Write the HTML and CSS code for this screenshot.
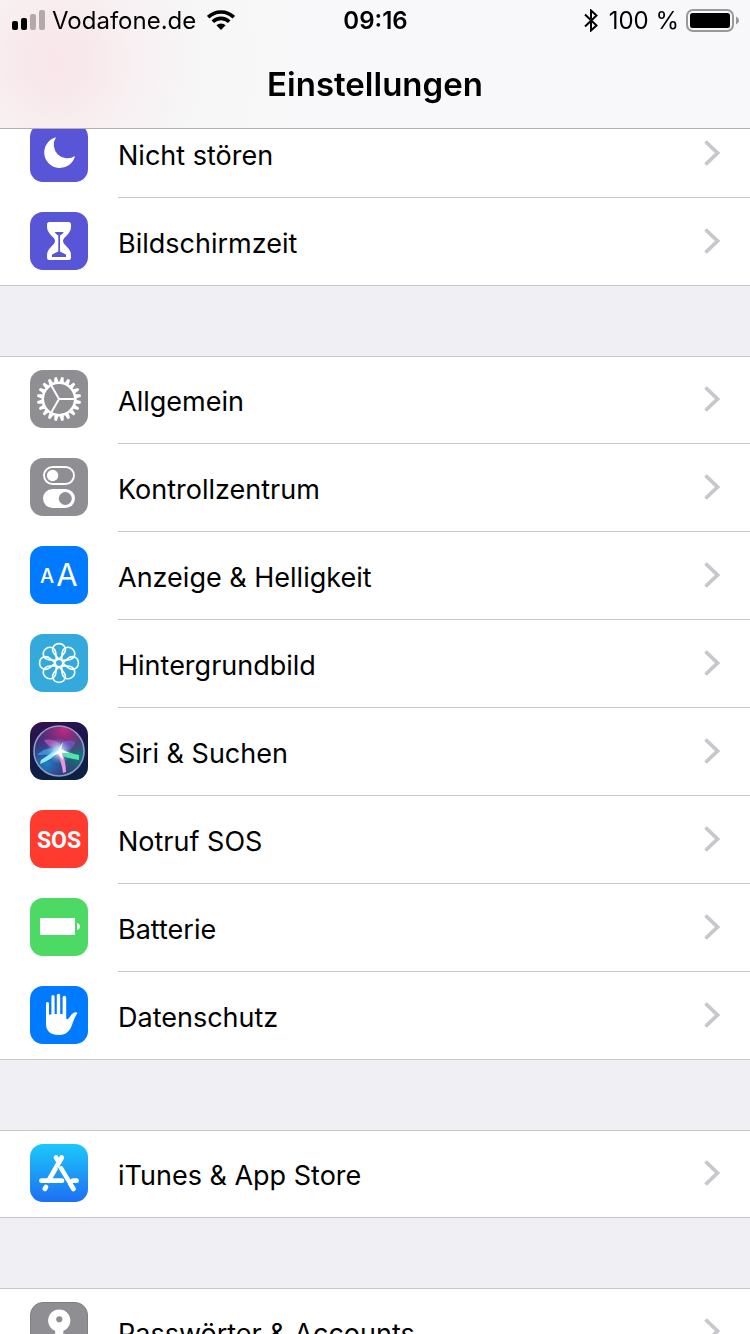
FILE: index.html
```html
<!DOCTYPE html>
<html lang="de">
<head>
    <meta charset="UTF-8">
    <meta name="viewport" content="width=device-width, initial-scale=1.0">
    <title>Einstellungen</title>
    <link rel="stylesheet" href="styles.css">
</head>
<body>
    <!-- shared shapes -->
    <svg class="defs" aria-hidden="true">
        <symbol id="chevron" viewBox="0 0 16 26">
            <path d="M1.5 1.5 13.500 13 1.5 24.5" fill="none" stroke="#c7c7cc" stroke-width="3.8"/>
        </symbol>
    </svg>

    <header class="header">
        <div class="status-bar">
            <div class="status-left">
                <svg class="signal" width="33" height="20" viewBox="0 0 33 20">
                    <rect x="0" y="11" width="6" height="9" rx="2"/>
                    <rect x="9" y="8" width="6" height="12" rx="2"/>
                    <rect x="18" y="4" width="6" height="16" rx="2" opacity=".28"/>
                    <rect x="27" y="0" width="6" height="20" rx="2" opacity=".28"/>
                </svg>
                <span class="status-text">Vodafone.de</span>
                <svg class="wifi" width="28" height="20" viewBox="0 0 28 20">
                    <g fill="none" stroke="#000" stroke-width="3.6">
                        <path d="M1.2 7.2A18.2 18.2 0 0 1 26.8 7.2"/>
                        <path d="M5.8 11.8A11.6 11.6 0 0 1 22.2 11.8"/>
                    </g>
                    <path d="M14 20 9.4 15.3A6.5 6.5 0 0 1 18.6 15.3Z"/>
                </svg>
            </div>
            <div class="status-time status-text">09:16</div>
            <div class="status-right">
                <svg class="bluetooth" width="14" height="23" viewBox="0 0 14 23">
                    <path d="M1 5.5 12.5 16.5 7 21.5V1.5L12.5 6.5 1 17.5" fill="none" stroke="#000" stroke-width="2"/>
                </svg>
                <span class="status-text">100 %</span>
                <svg class="battery" width="53" height="23" viewBox="0 0 53 23">
                    <rect x="1" y="1" width="46" height="21" rx="6" fill="none" stroke="#999" stroke-width="2"/>
                    <rect x="4" y="4" width="40" height="15" rx="2.5"/>
                    <path d="M50 7.5C52.2 8.6 53 10 53 11.5S52.2 14.4 50 15.5Z" fill="#999"/>
                </svg>
            </div>
        </div>
        <h1 class="title">Einstellungen</h1>
    </header>

    <main class="settings">
        <nav class="group">
            <a class="row" href="#nicht-stoeren">
                <svg class="icon purple" viewBox="0 0 58 58">
                    <path d="M26 13.3A15.6 15.6 0 1 0 45 32 13.6 13.6 0 0 1 26 13.3Z" fill="#fff"/>
                </svg>
                <span class="row-body"><span class="label">Nicht stören</span><svg class="chevron"><use href="#chevron"/></svg></span>
            </a>
            <a class="row" href="#bildschirmzeit">
                <svg class="icon purple" viewBox="0 0 58 58">
                    <path d="M19.5 10H38.5Q41 10 41 12.5V15C41 22 33 25 33 29S41 36 41 43V45.5Q41 48 38.5 48H19.5Q17 48 17 45.5V43C17 36 25 33 25 29S17 22 17 15V12.5Q17 10 19.5 10Z" fill="#fff"/>
                    <path d="M24.5 20H33.8Q32.5 22 30 23.6V39.5L36 42.5V45H22V42.5L28.3 39.5V23.6Q26 22 24.5 20Z" fill="#5856d6"/>
                </svg>
                <span class="row-body"><span class="label">Bildschirmzeit</span><svg class="chevron"><use href="#chevron"/></svg></span>
            </a>
        </nav>

        <nav class="group">
            <a class="row" href="#allgemein">
                <svg class="icon gray" viewBox="0 0 58 58">
                    <defs>
                        <path id="tooth" d="M-2.2-17-1.2-22H1.2L2.2-17Z"/>
                        <g id="teeth">
                            <use href="#tooth"/>
                            <use href="#tooth" transform="rotate(18)"/>
                            <use href="#tooth" transform="rotate(36)"/>
                            <use href="#tooth" transform="rotate(54)"/>
                            <use href="#tooth" transform="rotate(72)"/>
                        </g>
                    </defs>
                    <g transform="translate(29 29) rotate(9)" fill="#fff">
                        <use href="#teeth"/>
                        <use href="#teeth" transform="rotate(90)"/>
                        <use href="#teeth" transform="rotate(180)"/>
                        <use href="#teeth" transform="rotate(270)"/>
                    </g>
                    <g transform="translate(29 29)" fill="none" stroke="#fff">
                        <circle r="16.2" stroke-width="2.6"/>
                        <path d="M0 0H16M0 0-8-13.9M0 0-8 13.9" stroke-width="2"/>
                    </g>
                </svg>
                <span class="row-body"><span class="label">Allgemein</span><svg class="chevron"><use href="#chevron"/></svg></span>
            </a>
            <a class="row" href="#kontrollzentrum">
                <svg class="icon gray" viewBox="0 0 58 58">
                    <rect x="14" y="9" width="30" height="17" rx="8.5" fill="none" stroke="#fff" stroke-width="1.9"/>
                    <circle cx="22.6" cy="17.5" r="5.7" fill="#fff"/>
                    <rect x="13" y="31" width="32" height="19" rx="9.5" fill="#fff"/>
                    <circle cx="35.3" cy="40.5" r="6.5" fill="#8e8e93"/>
                </svg>
                <span class="row-body"><span class="label">Kontrollzentrum</span><svg class="chevron"><use href="#chevron"/></svg></span>
            </a>
            <a class="row" href="#anzeige">
                <svg class="icon blue" viewBox="0 0 58 58">
                    <text class="letter-small" x="17" y="37">A</text>
                    <text class="letter-big" x="37" y="40">A</text>
                </svg>
                <span class="row-body"><span class="label">Anzeige &amp; Helligkeit</span><svg class="chevron"><use href="#chevron"/></svg></span>
            </a>
            <a class="row" href="#hintergrundbild">
                <svg class="icon cyan" viewBox="0 0 58 58">
                    <defs>
                        <path id="petal" d="M0-3.8-4.2-8.5C-9-14-5-19.4 0-19.4S9-14 4.2-8.5Z"/>
                    </defs>
                    <g transform="translate(29 29)" fill="none" stroke="#fff" stroke-width="1.6">
                        <use href="#petal"/>
                        <use href="#petal" transform="rotate(45)"/>
                        <use href="#petal" transform="rotate(90)"/>
                        <use href="#petal" transform="rotate(135)"/>
                        <use href="#petal" transform="rotate(180)"/>
                        <use href="#petal" transform="rotate(225)"/>
                        <use href="#petal" transform="rotate(270)"/>
                        <use href="#petal" transform="rotate(315)"/>
                        <circle r="3.8"/>
                    </g>
                </svg>
                <span class="row-body"><span class="label">Hintergrundbild</span><svg class="chevron"><use href="#chevron"/></svg></span>
            </a>
            <a class="row" href="#siri">
                <svg class="icon siri" viewBox="0 0 58 58">
                    <defs>
                        <radialGradient id="siri-pink" cx=".6" cy=".05" r=".6">
                            <stop offset="0" stop-color="#c82a80"/>
                            <stop offset="1" stop-color="#8a2a8a" stop-opacity="0"/>
                        </radialGradient>
                        <radialGradient id="siri-blue" cx=".25" cy=".75" r=".55">
                            <stop offset="0" stop-color="#1a86c8"/>
                            <stop offset="1" stop-color="#3050a0" stop-opacity="0"/>
                        </radialGradient>
                        <radialGradient id="siri-green" cx=".9" cy=".6" r=".5">
                            <stop offset="0" stop-color="#147a78"/>
                            <stop offset="1" stop-color="#147a78" stop-opacity="0"/>
                        </radialGradient>
                        <radialGradient id="siri-glow">
                            <stop offset="0" stop-color="#fff"/>
                            <stop offset=".35" stop-color="#b8f0ff" stop-opacity=".7"/>
                            <stop offset="1" stop-color="#60a0ff" stop-opacity="0"/>
                        </radialGradient>
                    </defs>
                    <circle cx="29" cy="29" r="25" fill="#3c2c74"/>
                    <circle cx="29" cy="29" r="25" fill="url(#siri-blue)"/>
                    <circle cx="29" cy="29" r="25" fill="url(#siri-green)"/>
                    <circle cx="29" cy="29" r="25" fill="url(#siri-pink)"/>
                    <circle cx="29" cy="29" r="25" fill="none" stroke="#8c9cc4" stroke-width="1.6"/>
                    <path d="M30 29C24 27 16 23 14 18 22 16 31 19 33 28Z" fill="#e86ac8" opacity=".55"/>
                    <path d="M29 29C30 21 36 16 45 20 44 26 38 29 33 30Z" fill="#7c60d8" opacity=".6"/>
                    <path d="M29 28C22 24 13 27 7 33 16 33 24 32 29 31Z" fill="#48b8f0" opacity=".6"/>
                    <circle cx="29" cy="29" r="13" fill="url(#siri-glow)"/>
                    <path d="M31 27C24 35 18 39 10 42L11 38C18 34 23 29 28 26Z" fill="#98e8ff"/>
                    <path d="M28 27C37 29 43 32 49 33L49 38C41 37 34 35 28 31Z" fill="#58e0a8"/>
                    <path d="M30 27C34 33 36 42 36 50L33 51C32 43 30 36 26 30Z" fill="#e898d8"/>
                    <path d="M28 28 33 20 31 27 39 31 32 31 33 38 28 32 21 34Z" fill="#fff"/>
                </svg>
                <span class="row-body"><span class="label">Siri &amp; Suchen</span><svg class="chevron"><use href="#chevron"/></svg></span>
            </a>
            <a class="row" href="#notruf">
                <svg class="icon red" viewBox="0 0 58 58">
                    <text class="sos" x="29" y="38">SOS</text>
                </svg>
                <span class="row-body"><span class="label">Notruf SOS</span><svg class="chevron"><use href="#chevron"/></svg></span>
            </a>
            <a class="row" href="#batterie">
                <svg class="icon green" viewBox="0 0 58 58" fill="#fff">
                    <rect x="10" y="20" width="35" height="17"/>
                    <path d="M47 25C49 25.5 50 27 50 28.5S49 31.500 47 32Z"/>
                </svg>
                <span class="row-body"><span class="label">Batterie</span><svg class="chevron"><use href="#chevron"/></svg></span>
            </a>
            <a class="row" href="#datenschutz">
                <svg class="icon blue" viewBox="0 0 58 58" fill="#fff">
                    <path d="M16 17.5A1.5 1.5 0 0 1 19 17.5V28.5H21.4V10.5A1.6 1.6 0 0 1 24.6 10.5V28H26.8V9.5A1.7 1.7 0 0 1 30.2 9.5V28H32.6V11.5A1.8 1.8 0 0 1 36.2 11.5V32.5Q37.5 34 39 32L41.5 28.5Q44.5 25.5 47.5 26.7 45.5 30 44 33.5L41 41.5C38.5 46.5 34.5 49 29 49 20 49 16 44.5 16 38Z"/>
                </svg>
                <span class="row-body"><span class="label">Datenschutz</span><svg class="chevron"><use href="#chevron"/></svg></span>
            </a>
        </nav>

        <nav class="group">
            <a class="row" href="#itunes">
                <svg class="icon store" viewBox="0 0 58 58">
                    <g fill="none" stroke="#fff" stroke-width="4.8" stroke-linecap="round">
                        <path d="M31.8 13.5 18.5 36.7M26 13.5 28.5 17.5M11.5 36.7H32M31 24.5 43.5 45M43 36.7H46.5M16 43 14.8 44.8"/>
                    </g>
                    <path d="M27.5 23.5 37.5 40" fill="none" stroke="#1c9af8" stroke-width="1"/>
                </svg>
                <span class="row-body"><span class="label">iTunes &amp; App Store</span><svg class="chevron"><use href="#chevron"/></svg></span>
            </a>
        </nav>

        <nav class="group">
            <a class="row" href="#passwoerter">
                <svg class="icon gray key" viewBox="0 0 58 58">
                    <path d="M25 28.8A11.5 11.5 0 1 1 33.5 28.8V48L29 52 25 48Z" fill="#fff"/>
                    <circle cx="29.3" cy="16.8" r="3.2" fill="#8e8e93"/>
                </svg>
                <span class="row-body"><span class="label">Passwörter &amp; Accounts</span><svg class="chevron"><use href="#chevron"/></svg></span>
            </a>
        </nav>
    </main>
</body>
</html>
```
FILE: styles.css
```css
* { box-sizing: border-box; margin: 0; padding: 0; }
body {
    height: 100vh;
    overflow: hidden;
    font-family: Inter, "Liberation Sans", sans-serif;
    color: #000;
    background-color: #efeff4;
}
.defs {
    position: absolute;
    width: 0;
    height: 0;
}

/* the bar lies over the scrolling list */
.header {
    position: fixed;
    top: 0;
    left: 0;
    right: 0;
    z-index: 1;
    height: 129px;
    border-bottom: 1px solid #b2b2b4;
    background: radial-gradient(circle at 56px 62px, #f8e5e9 0, #f8e9ec 35px, #f8f0f2 80px, #f7f7f7 150px, #f8f8fa 260px);
}
.status-bar {
    display: grid;
    grid-template-columns: 1fr auto 1fr;
    align-items: center;
    height: 40px;
    padding: 0 11px 0 12px;
    font-size: 24px;
}
.status-text {
    padding-top: 2px;
    line-height: 38px;
}
.status-left, .status-right {
    display: flex;
    align-items: center;
    gap: 7px;
}
.wifi { margin-left: 4px; }
.status-right { justify-content: flex-end; }
.bluetooth { margin-right: 4px; }
.status-time { font-weight: 600; }
.title {
    font-size: 33px;
    font-weight: 600;
    line-height: 88px;
    text-align: center;
}

.settings {
    height: 100%;
    padding-top: 110px;
    overflow-y: auto;
    scrollbar-width: none;
}
.group {
    margin-bottom: 70px;
    background-color: #fff;
    box-shadow: inset 0 1px #c8c7cc, inset 0 -1px #c8c7cc;
}
.row {
    display: flex;
    align-items: center;
    padding-left: 30px;
    color: inherit;
    text-decoration: none;
}
.row-body {
    flex: 1;
    display: flex;
    align-items: center;
    justify-content: space-between;
    height: 88px;
    padding: 0 30px 1px 0;
    border-bottom: 1px solid #c8c7cc;
}
.row:last-child .row-body { border-bottom-color: transparent; }
.label {
    padding-top: 6px;
    font-size: 27px;
    line-height: 36px;
}
.chevron {
    width: 16px;
    height: 26px;
}

.icon {
    flex: none;
    width: 58px;
    height: 58px;
    margin: 0 30px 2px 0;
    border-radius: 13px;
}
.purple { background-color: #5856d6; }
.gray { background-color: #8e8e93; }
.blue { background-color: #007aff; }
.cyan { background-color: #34aadc; }
.red { background-color: #ff3b30; }
.green { background-color: #4cd964; }
.siri { background: linear-gradient(165deg, #34104e, #14194a 50%, #0a2440); }
.store { background: linear-gradient(#1cc8fb, #1d6ff2); }
.key { border: 1px solid #7e7e83; }

.letter-small, .letter-big, .sos {
    fill: #fff;
    text-anchor: middle;
}
.letter-small {
    font-size: 20px;
    font-weight: 500;
}
.letter-big { font-size: 31px; }
.sos {
    font-family: Roboto, sans-serif;
    font-size: 23px;
    font-weight: 700;
}
```
